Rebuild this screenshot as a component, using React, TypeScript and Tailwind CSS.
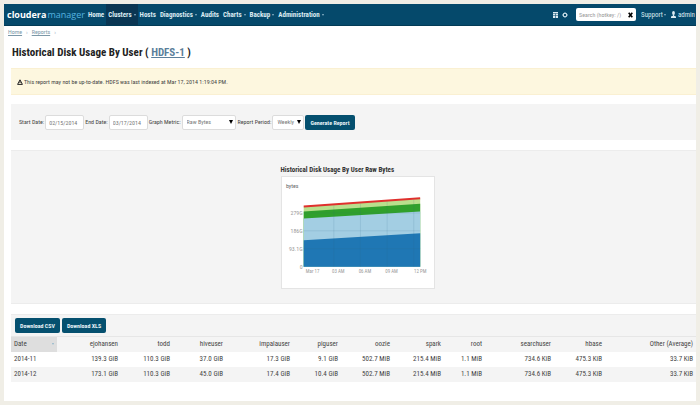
import type { ReactNode } from "react";

const menu = [
  { label: "Home", caret: false },
  { label: "Clusters", caret: true, active: true },
  { label: "Hosts", caret: false },
  { label: "Diagnostics", caret: true },
  { label: "Audits", caret: false },
  { label: "Charts", caret: true },
  { label: "Backup", caret: true },
  { label: "Administration", caret: true },
];

const columns = [
  { name: "Date", width: 46 },
  { name: "ejohansen", width: 64 },
  { name: "todd", width: 52 },
  { name: "hiveuser", width: 53 },
  { name: "impalauser", width: 67 },
  { name: "piguser", width: 48 },
  { name: "oozie", width: 52 },
  { name: "spark", width: 51 },
  { name: "root", width: 41 },
  { name: "searchuser", width: 69 },
  { name: "hbase", width: 51 },
  { name: "Other (Average)", width: 91 },
];

const rows = [
  ["2014-11", "139.3 GiB", "110.3 GiB", "37.0 GiB", "17.3 GiB", "9.1 GiB", "502.7 MiB", "215.4 MiB", "1.1 MiB", "734.6 KiB", "475.3 KiB", "33.7 KiB"],
  ["2014-12", "173.1 GiB", "110.3 GiB", "45.0 GiB", "17.4 GiB", "10.4 GiB", "502.7 MiB", "215.4 MiB", "1.1 MiB", "734.6 KiB", "475.3 KiB", "33.7 KiB"],
];

function Caret() {
  return <span className="border-x-[1px] border-t-2 border-x-transparent border-t-[#8fb6cb]" />;
}

function PrimaryButton({ children }: { children: ReactNode }) {
  return (
    <button type="button" className="h-[15px] rounded-xs bg-[#05506f] px-[5px] text-[6px] leading-[15px] font-bold whitespace-nowrap text-[#e6f1f6]">
      {children}
    </button>
  );
}

function Select({ id, value, width }: { id: string; value: string; width: string }) {
  return (
    <span className={`relative block ${width}`}>
      <select id={id} defaultValue={value} className="block h-[15px] w-full appearance-none rounded-xs border border-[#dcdcdc] bg-white pl-1 text-[6px] text-[#777]">
        <option>{value}</option>
      </select>
      <span className="pointer-events-none absolute top-[5px] right-[3px] border-x-2 border-t-4 border-x-transparent border-t-black" />
    </span>
  );
}

function Chart() {
  return (
    <svg viewBox="0 0 154 112" className="block w-full border border-[#e4e4e4] bg-white" role="img" aria-label="Historical Disk Usage By User Raw Bytes">
      <text x="4" y="11" fontSize="6" fill="#666">bytes</text>
      <polygon points="22,30 140,22 140,91 22,91" fill="#b9df8d" />
      <polygon points="22,35 140,27 140,91 22,91" fill="#30a02c" />
      <polygon points="22,42 140,35 140,91 22,91" fill="#a3cee3" />
      <polygon points="22,64 140,57 140,91 22,91" fill="#1f77b4" />
      <polyline points="22,30 140,21.5" stroke="#df302d" strokeWidth="2" fill="none" />
      <g stroke="#336688" strokeOpacity="0.13">
        <path d="M22 36.5H140M22 54.5H140M22 72.5H140" />
        <path d="M52.5 29V91M79.5 27V91M106.5 25V91M133.5 23V91" />
      </g>
      <g fontSize="6" fill="#999" textAnchor="end">
        <text x="21" y="38">279G</text>
        <text x="21" y="57">186G</text>
        <text x="21" y="75">93.1G</text>
        <text x="21" y="93">0</text>
      </g>
      <g fontSize="5" fill="#999" textAnchor="middle">
        <text x="31" y="97">Mar 17</text>
        <text x="57" y="97">03 AM</text>
        <text x="84" y="97">06 AM</text>
        <text x="111" y="97">09 AM</text>
        <text x="140" y="97">12 PM</text>
      </g>
    </svg>
  );
}

export default function App() {
  return (
    <div className="min-h-screen bg-[#f0eee6] p-1 font-['Roboto_Condensed','Roboto','Liberation_Sans',sans-serif] text-[7px] leading-2 text-[#444]">
      <div className="min-h-[397px] bg-white">
        <header className="flex h-[22px] items-center border-b border-[#023b56] bg-[#05496b] pl-[3px] text-[#dcebf2]">
          <a href="#home" className="mr-px flex items-center gap-px font-['Open_Sans',sans-serif] text-[9px] leading-4">
            <span className="font-bold text-white">cloudera</span>
            <span className="text-[#56b4e0]">manager</span>
          </a>
          <nav className="flex h-full font-bold">
            {menu.map((m) => (
              <a key={m.label} href="#menu" className={`flex items-center gap-0.5 px-0.5 ${m.active ? "bg-[#0a3653]" : ""}`}>
                {m.label}
                {m.caret && <Caret />}
              </a>
            ))}
          </nav>
          <div className="ml-auto flex items-center">
            <button type="button" aria-label="Running commands">
              <svg viewBox="0 0 5 6" className="h-1.5 w-[5px]" fill="currentColor">
                <path d="M0 0h5v1.2H0zM0 1.8h2.2v1.6H0zM2.8 1.8H5v1.6H2.8zM0 4h2.2v2H0zM2.8 4H5v2H2.8z" />
              </svg>
            </button>
            <button type="button" aria-label="Settings" className="ml-1">
              <svg viewBox="0 0 6 6" className="size-1.5" fill="none" stroke="currentColor">
                <circle cx="3" cy="3" r="1.8" strokeWidth="1.1" />
                <path d="M3 0v1M3 5v1M0 3h1M5 3h1" strokeWidth="0.6" />
              </svg>
            </button>
            <div className="ml-2 flex h-[13px] w-[60px] items-center rounded-xs bg-white px-[3px]">
              <input aria-label="Search" placeholder="Search (hotkey: /)" className="w-full min-w-0 text-[6px] text-[#444] placeholder:text-[#999]" />
              <button type="button" aria-label="Clear" className="text-black">
                <svg viewBox="0 0 5 6" className="h-1.5 w-[5px]" stroke="currentColor" strokeWidth="1.6"><path d="M.7.7l3.6 4.6M4.3.7L.7 5.3" /></svg>
              </button>
            </div>
            <a href="#support" className="ml-[5px] flex items-center gap-px">Support<Caret /></a>
            <a href="#admin" className="ml-[5px] flex items-center gap-0.5 pr-px">
              <svg viewBox="0 0 5 7" className="h-[7px] w-[5px]" fill="currentColor"><ellipse cx="2.5" cy="2" rx="1.4" ry="2" /><path d="M1.9 3.5h1.2v1.2L5 5.6V7H0V5.6l1.9-.9z" /></svg>
              admin
            </a>
          </div>
        </header>
        <nav aria-label="Breadcrumb" className="flex gap-1 px-1 pt-0.5 text-[6px] text-[#9ab]">
          <a href="#home" className="text-[#7c98a8] underline">Home</a>
          <span>›</span>
          <a href="#reports" className="text-[#7c98a8] underline">Reports</a>
          <span>›</span>
        </nav>
        <main className="pl-[7px]">
          <h1 className="mt-[7px] pl-px text-[11px] leading-5 font-bold text-[#222]">
            Historical Disk Usage By User ( <a href="#hdfs" className="text-[#5b7f9b] underline">HDFS-1</a> )
          </h1>
          <div role="alert" className="mt-[5px] flex h-[27px] items-center gap-px border-y border-[#faf0d2] bg-[#fdf7df] pl-[6px] text-[6px] text-[#444]">
            <svg viewBox="0 0 6 6" className="size-1.5" fill="none" stroke="#222"><path d="M3 .8L5.4 5.4H.6zM3 2.4v1.6" /></svg>
            This report may not be up-to-date. HDFS was last indexed at Mar 17, 2014 1:19:04 PM.
          </div>
          <form className="mt-[9px] flex h-9 items-center gap-px bg-[#f4f4f4] pl-2 text-[6px]">
            <label htmlFor="start">Start Date:</label>
            <input id="start" defaultValue="02/15/2014" className="h-[15px] w-[39px] rounded-xs border border-[#dcdcdc] bg-white px-[3px] text-[6px] text-[#777]" />
            <label htmlFor="end">End Date:</label>
            <input id="end" defaultValue="03/17/2014" className="h-[15px] w-[39px] rounded-xs border border-[#dcdcdc] bg-white px-[3px] text-[6px] text-[#777]" />
            <label htmlFor="metric">Graph Metric:</label>
            <Select id="metric" value="Raw Bytes" width="w-[54px]" />
            <label htmlFor="period" className="pl-px">Report Period:</label>
            <Select id="period" value="Weekly" width="w-[32px]" />
            <PrimaryButton>Generate Report</PrimaryButton>
          </form>
          <section className="mt-[10px] flex h-[154px] justify-center border-y border-[#ececec] bg-[#f4f4f4] pt-[15px] pl-2">
            <figure className="w-[154px]">
              <figcaption className="mb-0.5 text-[7px] leading-2 font-bold text-[#333]">Historical Disk Usage By User Raw Bytes</figcaption>
              <Chart />
            </figure>
          </section>
          <section className="mt-[10px] border-t border-[#ececec] bg-[#f4f4f4]">
            <div className="flex gap-0.5 px-1 pt-[3px] pb-[3px]">
              <PrimaryButton>Download CSV</PrimaryButton>
              <PrimaryButton>Download XLS</PrimaryButton>
            </div>
            <table className="w-full table-fixed border-collapse text-right whitespace-nowrap">
              <colgroup>
                {columns.map((c) => <col key={c.name} style={{ width: c.width }} />)}
              </colgroup>
              <thead>
                <tr className="h-[15px] border-t border-[#e6e6e6]">
                  {columns.map((c, i) => (
                    <th key={c.name} scope="col" className="px-[3px] font-normal first:bg-[#dedede] first:text-left">
                      {i === 0 ? <span className="flex items-center justify-between">{c.name}<Caret /></span> : c.name}
                    </th>
                  ))}
                </tr>
              </thead>
              <tbody>
                {rows.map((r) => (
                  <tr key={r[0]} className="h-[15px] odd:bg-white">
                    {r.map((v, i) => <td key={columns[i].name} className="px-[3px] first:text-left">{v}</td>)}
                  </tr>
                ))}
              </tbody>
            </table>
          </section>
        </main>
      </div>
    </div>
  );
}
